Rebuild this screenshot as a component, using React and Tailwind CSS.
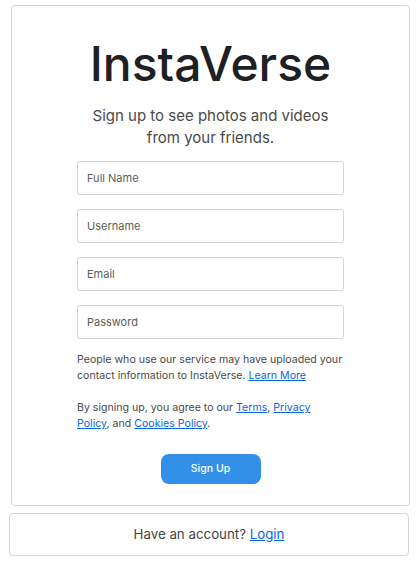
import React from 'react';

const fields = ['Full Name', 'Username', 'Email', 'Password'];

const App = () => {
  return (
    <div className="min-h-screen bg-white font-['Inter',sans-serif] text-[#262626]">
      {/* Sign up card */}
      <div className="ml-[11px] mt-[5px] flex h-[501px] w-[399px] flex-col items-center rounded-[4px] border border-[#d6d6d6] bg-white">
        <h1 className="mt-[29px] text-[48px] font-medium leading-[58px] text-[#1e2023]">
          InstaVerse
        </h1>
        <p className="mt-[12px] w-[250px] text-center text-[15px] leading-[22px] text-[#4a4a4a]">
          Sign up to see photos and videos from your friends.
        </p>

        <form className="mt-[12px] flex w-[267px] flex-col gap-[14px]" onSubmit={(e) => e.preventDefault()}>
          {fields.map((f) => (
            <input
              key={f}
              type={f === 'Password' ? 'password' : 'text'}
              placeholder={f}
              className="h-[34px] w-full rounded-[3px] border border-[#d4d4d4] bg-white px-[9px] text-[11px] text-[#333] outline-none placeholder:text-[#5c5c5c]"
            />
          ))}

          <p className="-mt-[1px] text-[10.6px] leading-[16px] text-[#4a4a4a]">
            People who use our service may have uploaded your contact information to InstaVerse.{' '}
            <a href="#" className="text-[#0a66e0] underline">Learn More</a>
          </p>
          <p className="mt-[2px] text-[10.6px] leading-[16px] text-[#4a4a4a]">
            By signing up, you agree to our{' '}
            <a href="#" className="text-[#0a66e0] underline">Terms</a>,{' '}
            <a href="#" className="text-[#0a66e0] underline">Privacy Policy</a>, and{' '}
            <a href="#" className="text-[#0a66e0] underline">Cookies Policy</a>.
          </p>

          <button
            type="submit"
            className="mx-auto mt-[8px] h-[30px] w-[100px] rounded-[8px] bg-[#3390e9] text-[10.5px] font-medium text-white"
          >
            Sign Up
          </button>
        </form>
      </div>

      {/* Login card */}
      <div className="ml-[9px] mt-[7px] flex h-[43px] w-[400px] items-center justify-center rounded-[4px] border border-[#d6d6d6] bg-white">
        <p className="text-[13.3px] text-[#444]">
          Have an account? <a href="#" className="text-[#0a66e0] underline">Login</a>
        </p>
      </div>
    </div>
  );
};

export default App;
